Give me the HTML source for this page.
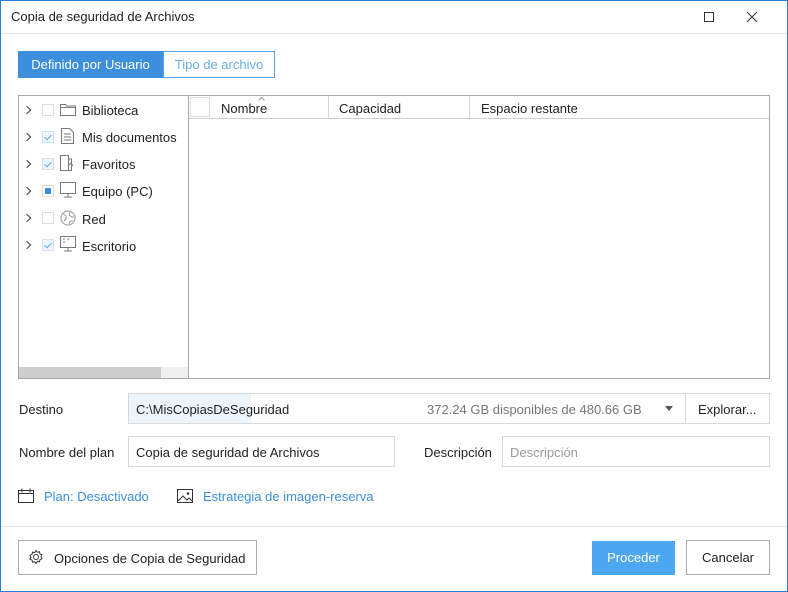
<!DOCTYPE html>
<html><head><meta charset="utf-8"><style>
*{box-sizing:border-box;margin:0;padding:0}
body{width:788px;height:592px;background:#fff;font-family:"Liberation Sans",sans-serif;font-size:13px;color:#222;position:relative;overflow:hidden}
.a{position:absolute}
.win{left:0;top:0;width:788px;height:592px;border:1px solid #2b7fd0}
.t{white-space:nowrap}
.cb{width:12px;height:12px;border:1px solid #ddd;background:#fff}
.cb.c{border-color:#cfe0f3;background:#eef5fc}
.cb.c::after{content:"";position:absolute;left:3px;top:1px;width:3px;height:6px;border:solid #6aa7e4;border-width:0 1px 1px 0;transform:rotate(45deg)}
.arr{width:6px;height:6px;border:solid #444;border-width:1px 1px 0 0;transform:rotate(45deg)}
.in{border:1px solid #d9d9d9;background:#fff}
</style></head><body>
<div class="a win"></div>
<div class="a t" style="left:11px;top:9px;font-size:13px">Copia de seguridad de Archivos</div>
<div class="a" style="left:704px;top:12px;width:10px;height:10px;border:1px solid #333"></div>
<svg class="a" style="left:746px;top:11px" width="12" height="12"><path d="M1 1L11 11M11 1L1 11" stroke="#333" stroke-width="1"/></svg>
<div class="a" style="left:1px;top:33px;width:786px;height:1px;background:#e5e5e5"></div>

<div class="a t" style="left:18px;top:51px;width:145px;height:27px;background:#3c8fdc;color:#fff;line-height:27px;text-align:center">Definido por Usuario</div>
<div class="a t" style="left:163px;top:51px;width:112px;height:27px;border:1px solid #5aa1e3;color:#6aaee8;line-height:25px;text-align:center">Tipo de archivo</div>

<div class="a" style="left:18px;top:95px;width:752px;height:284px;border:1px solid #a8a8a8"></div>
<div class="a" style="left:188px;top:95px;width:1px;height:284px;background:#a8a8a8"></div>
<div class="a" style="left:19px;top:367px;width:169px;height:11px;background:#efefef"></div>
<div class="a" style="left:19px;top:367px;width:142px;height:11px;background:#cdcdcd"></div>
<div class="a" style="left:189px;top:118px;width:580px;height:1px;background:#cfcfcf"></div>
<div class="a" style="left:190px;top:97px;width:20px;height:20px;border:1px solid #ddd"></div>
<div class="a t" style="left:221px;top:101px">Nombre</div>
<svg class="a" style="left:258px;top:97px" width="7" height="4"><path d="M.5 3.5L3.5.5l3 3" fill="none" stroke="#999"/></svg>
<div class="a" style="left:328px;top:96px;width:1px;height:22px;background:#d5d5d5"></div>
<div class="a t" style="left:339px;top:101px">Capacidad</div>
<div class="a" style="left:469px;top:96px;width:1px;height:22px;background:#d5d5d5"></div>
<div class="a t" style="left:481px;top:101px">Espacio restante</div>

<!-- tree rows -->
<div class="a arr" style="left:24px;top:107px"></div><div class="a cb" style="left:42px;top:104px"></div>
<svg class="a" style="left:60px;top:102px" width="16" height="14"><path d="M.5 2.5h5l1.5 1.5h8.5v9.5H.5z M.5 5.5h15" fill="none" stroke="#777"/></svg>
<div class="a t" style="left:82px;top:103px">Biblioteca</div>

<div class="a arr" style="left:24px;top:134px"></div><div class="a cb c" style="left:42px;top:131px"></div>
<svg class="a" style="left:61px;top:128px" width="13" height="16"><path d="M.5.5h8l4 4v11H.5z M3 6h7M3 9h7M3 12h7" fill="none" stroke="#777"/></svg>
<div class="a t" style="left:82px;top:130px">Mis documentos</div>

<div class="a arr" style="left:24px;top:161px"></div><div class="a cb c" style="left:42px;top:158px"></div>
<svg class="a" style="left:60px;top:155px" width="15" height="16"><path d="M.5.5h8v15H.5z M8.5 4h3v11.5h-3 M9 10l2-2 2 3" fill="none" stroke="#777"/></svg>
<div class="a t" style="left:82px;top:157px">Favoritos</div>

<div class="a arr" style="left:24px;top:188px"></div><div class="a" style="left:42px;top:185px;width:12px;height:12px;border:1px solid #ddd"></div><div class="a" style="left:45px;top:188px;width:6px;height:6px;background:#3c8fdc"></div>
<svg class="a" style="left:60px;top:182px" width="17" height="16"><path d="M.5.5h15v11H.5z M8 11.5v3M4 15h8" fill="none" stroke="#777"/></svg>
<div class="a t" style="left:82px;top:184px">Equipo (PC)</div>

<div class="a arr" style="left:24px;top:215px"></div><div class="a cb" style="left:42px;top:212px"></div>
<svg class="a" style="left:60px;top:210px" width="16" height="16"><circle cx="8" cy="8" r="7" fill="none" stroke="#999"/><path d="M3 4l3 2v3l-2 2M10 2l-1 3 3 2 2 0M9 14l1-3 3 0" fill="none" stroke="#999"/></svg>
<div class="a t" style="left:82px;top:212px">Red</div>

<div class="a arr" style="left:24px;top:242px"></div><div class="a cb c" style="left:42px;top:239px"></div>
<svg class="a" style="left:60px;top:236px" width="17" height="16"><path d="M.5.5h15v11H.5z M8 11.5v3M4 15h8 M3 3h2M3 6h2M7 3h2" fill="none" stroke="#777"/></svg>
<div class="a t" style="left:82px;top:239px">Escritorio</div>

<!-- destino -->
<div class="a t" style="left:19px;top:402px">Destino</div>
<div class="a" style="left:128px;top:393px;width:642px;height:31px;border:1px solid #d9d9d9"></div>
<div class="a" style="left:129px;top:394px;width:122px;height:29px;background:#ecf4fc"></div>
<div class="a t" style="left:136px;top:402px">C:\MisCopiasDeSeguridad</div>
<div class="a t" style="left:427px;top:402px;color:#777">372.24 GB disponibles de 480.66 GB</div>
<svg class="a" style="left:665px;top:406px" width="9" height="6"><path d="M0 0h8L4 5z" fill="#555"/></svg>
<div class="a" style="left:685px;top:393px;width:1px;height:31px;background:#d9d9d9"></div>
<div class="a t" style="left:698px;top:402px">Explorar...</div>

<div class="a t" style="left:19px;top:445px">Nombre del plan</div>
<div class="a in" style="left:128px;top:436px;width:267px;height:31px"></div>
<div class="a t" style="left:136px;top:445px">Copia de seguridad de Archivos</div>
<div class="a t" style="left:424px;top:445px">Descripción</div>
<div class="a in" style="left:502px;top:436px;width:268px;height:31px"></div>
<div class="a t" style="left:510px;top:445px;color:#999">Descripción</div>

<svg class="a" style="left:18px;top:488px" width="17" height="16"><path d="M.5 2.5h15v12H.5z M.5 5.5h15 M4 .5v4M12 .5v4" fill="none" stroke="#333"/></svg>
<div class="a t" style="left:44px;top:489px;color:#3c8fdc">Plan: Desactivado</div>
<svg class="a" style="left:177px;top:489px" width="16" height="14"><path d="M.5.5h15v13H.5z M1 12l5-5 4 4 2-2 3 3" fill="none" stroke="#333"/><circle cx="11" cy="4.5" r="1.3" fill="#333"/></svg>
<div class="a t" style="left:203px;top:489px;color:#3c8fdc">Estrategia de imagen-reserva</div>

<div class="a" style="left:1px;top:526px;width:786px;height:1px;background:#e5e5e5"></div>

<div class="a" style="left:18px;top:540px;width:239px;height:35px;border:1px solid #adadad"></div>
<svg class="a" style="left:28px;top:549px" width="16" height="16"><circle cx="8" cy="8" r="2.5" fill="none" stroke="#333"/><path d="M8 1.5l1.3 1.8 2.2-.6.4 2.2 2.1.9-1 2 1 2-2.1.9-.4 2.2-2.2-.6L8 14.5 6.7 12.7l-2.2.6-.4-2.2-2.1-.9 1-2-1-2 2.1-.9.4-2.2 2.2.6z" fill="none" stroke="#333"/></svg>
<div class="a t" style="left:54px;top:551px">Opciones de Copia de Seguridad</div>

<div class="a t" style="left:592px;top:541px;width:83px;height:34px;background:#4da6f0;color:#fff;line-height:34px;text-align:center">Proceder</div>
<div class="a t" style="left:686px;top:540px;width:84px;height:35px;border:1px solid #adadad;line-height:33px;text-align:center">Cancelar</div>
</body></html>
